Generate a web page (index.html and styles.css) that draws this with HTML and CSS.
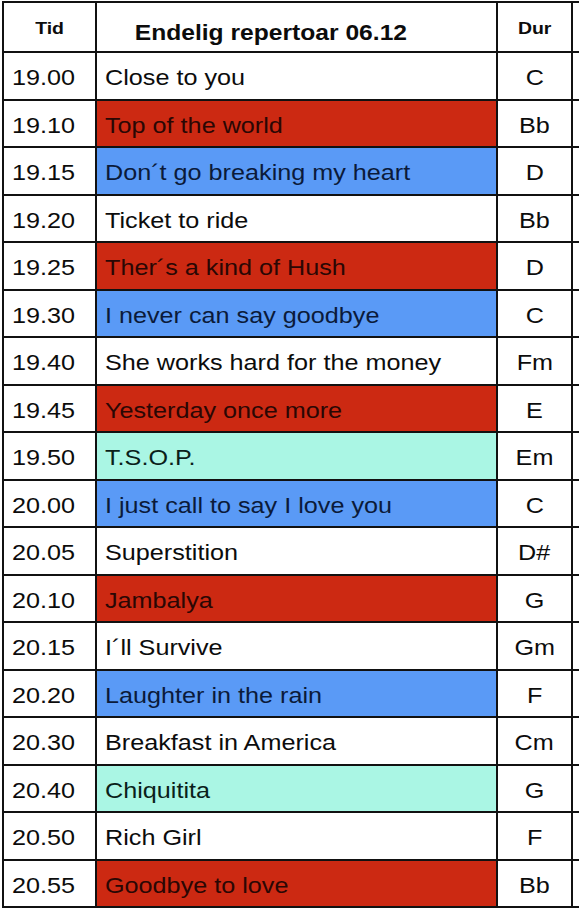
FILE: index.html
```html
<!DOCTYPE html>
<html lang="no">
<head>
<meta charset="utf-8">
<title>Endelig repertoar 06.12</title>
<link rel="stylesheet" href="styles.css">
</head>
<body>
<div class="sheet">
  <div class="cell head"><span class="t">Tid</span></div>
  <div class="cell head title"><span class="t">Endelig repertoar 06.12</span></div>
  <div class="cell head"><span class="t">Dur</span></div>
  <div class="cell extra"></div>

  <div class="cell time"><span class="t">19.00</span></div>
  <div class="cell song"><span class="t">Close to you</span></div>
  <div class="cell key"><span class="t">C</span></div>
  <div class="cell extra"></div>

  <div class="cell time"><span class="t">19.10</span></div>
  <div class="cell song red"><span class="t">Top of the world</span></div>
  <div class="cell key"><span class="t">Bb</span></div>
  <div class="cell extra"></div>

  <div class="cell time"><span class="t">19.15</span></div>
  <div class="cell song blue"><span class="t">Don´t go breaking my heart</span></div>
  <div class="cell key"><span class="t">D</span></div>
  <div class="cell extra"></div>

  <div class="cell time"><span class="t">19.20</span></div>
  <div class="cell song"><span class="t">Ticket to ride</span></div>
  <div class="cell key"><span class="t">Bb</span></div>
  <div class="cell extra"></div>

  <div class="cell time"><span class="t">19.25</span></div>
  <div class="cell song red"><span class="t">Ther´s a kind of Hush</span></div>
  <div class="cell key"><span class="t">D</span></div>
  <div class="cell extra"></div>

  <div class="cell time"><span class="t">19.30</span></div>
  <div class="cell song blue"><span class="t">I never can say goodbye</span></div>
  <div class="cell key"><span class="t">C</span></div>
  <div class="cell extra"></div>

  <div class="cell time"><span class="t">19.40</span></div>
  <div class="cell song"><span class="t">She works hard for the money</span></div>
  <div class="cell key"><span class="t">Fm</span></div>
  <div class="cell extra"></div>

  <div class="cell time"><span class="t">19.45</span></div>
  <div class="cell song red"><span class="t">Yesterday once more</span></div>
  <div class="cell key"><span class="t">E</span></div>
  <div class="cell extra"></div>

  <div class="cell time"><span class="t">19.50</span></div>
  <div class="cell song mint"><span class="t">T.S.O.P.</span></div>
  <div class="cell key"><span class="t">Em</span></div>
  <div class="cell extra"></div>

  <div class="cell time"><span class="t">20.00</span></div>
  <div class="cell song blue"><span class="t">I just call to say I love you</span></div>
  <div class="cell key"><span class="t">C</span></div>
  <div class="cell extra"></div>

  <div class="cell time"><span class="t">20.05</span></div>
  <div class="cell song"><span class="t">Superstition</span></div>
  <div class="cell key"><span class="t">D#</span></div>
  <div class="cell extra"></div>

  <div class="cell time"><span class="t">20.10</span></div>
  <div class="cell song red"><span class="t">Jambalya</span></div>
  <div class="cell key"><span class="t">G</span></div>
  <div class="cell extra"></div>

  <div class="cell time"><span class="t">20.15</span></div>
  <div class="cell song"><span class="t">I´ll Survive</span></div>
  <div class="cell key"><span class="t">Gm</span></div>
  <div class="cell extra"></div>

  <div class="cell time"><span class="t">20.20</span></div>
  <div class="cell song blue"><span class="t">Laughter in the rain</span></div>
  <div class="cell key"><span class="t">F</span></div>
  <div class="cell extra"></div>

  <div class="cell time"><span class="t">20.30</span></div>
  <div class="cell song"><span class="t">Breakfast in America</span></div>
  <div class="cell key"><span class="t">Cm</span></div>
  <div class="cell extra"></div>

  <div class="cell time"><span class="t">20.40</span></div>
  <div class="cell song mint"><span class="t">Chiquitita</span></div>
  <div class="cell key"><span class="t">G</span></div>
  <div class="cell extra"></div>

  <div class="cell time"><span class="t">20.50</span></div>
  <div class="cell song"><span class="t">Rich Girl</span></div>
  <div class="cell key"><span class="t">F</span></div>
  <div class="cell extra"></div>

  <div class="cell time"><span class="t">20.55</span></div>
  <div class="cell song red"><span class="t">Goodbye to love</span></div>
  <div class="cell key"><span class="t">Bb</span></div>
  <div class="cell extra"></div>
</div>
</body>
</html>
```
FILE: styles.css
```css
html, body {
  margin: 0;
  padding: 0;
  background: #ffffff;
  overflow: hidden;
}

body {
  font-family: "Liberation Sans", Arial, sans-serif;
  color: #0c0c0c;
}

.sheet {
  margin: 1px 0 0 2px;
  display: grid;
  grid-template-columns: 91px 399px 73px 1fr;
  grid-template-rows: 48px repeat(18, 45.5px);
  gap: 2px;
  padding: 2px 0 2px 2px;
  background: #111111;
}

.cell {
  background: #ffffff;
  display: flex;
  align-items: center;
  overflow: hidden;
  white-space: nowrap;
}

.t {
  display: inline-block;
  transform: scaleX(1.145);
}

.head {
  justify-content: center;
  font-weight: bold;
  font-size: 17px;
  align-items: flex-start;
  padding-top: 16px;
}

.head .t {
  transform-origin: center;
}

.head.title {
  font-size: 21.5px;
  padding-top: 18px;
  padding-right: 52px;
}

.time,
.song,
.key {
  font-size: 22px;
  padding-top: 5px;
}

.time,
.song {
  padding-left: 8px;
}

.time .t,
.song .t {
  transform-origin: left center;
}

.key {
  justify-content: center;
}

.key .t {
  transform-origin: center;
}

.red {
  background: #cc2912;
  color: #2a0704;
}

.blue {
  background: #5a9af6;
  color: #0b1a3a;
}

.mint {
  background: #aaf6e4;
  color: #0a1f1a;
}
```
